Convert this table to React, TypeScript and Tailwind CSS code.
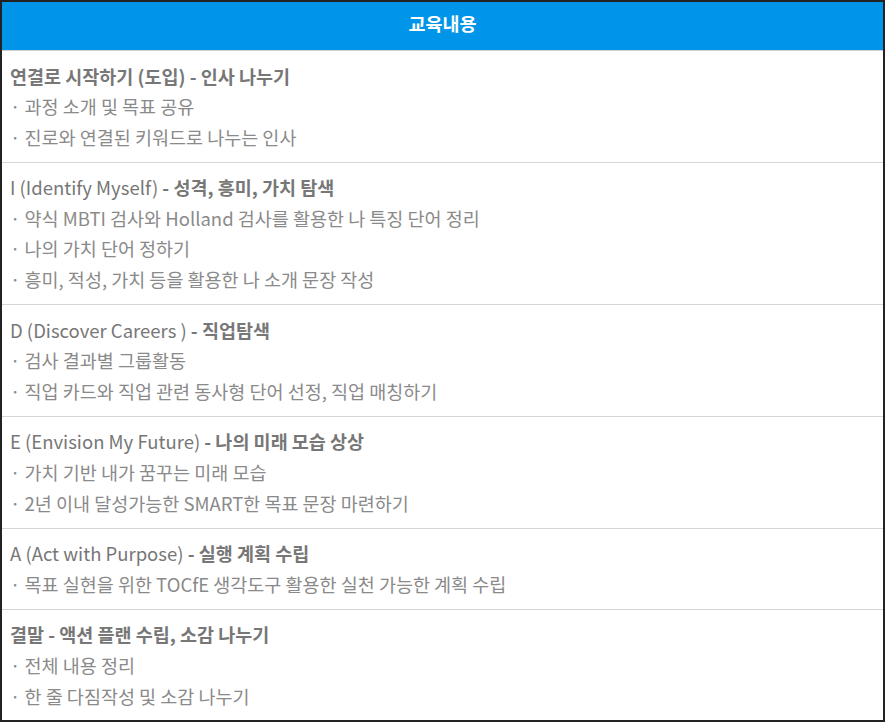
import React from "react";

const sections: { en?: string; title: string; items: string[] }[] = [
  {
    title: "연결로 시작하기 (도입) - 인사 나누기",
    items: ["과정 소개 및 목표 공유", "진로와 연결된 키워드로 나누는 인사"],
  },
  {
    en: "I (Identify Myself) ",
    title: "- 성격, 흥미, 가치 탐색",
    items: [
      "약식 MBTI 검사와 Holland 검사를 활용한 나 특징 단어 정리",
      "나의 가치 단어 정하기",
      "흥미, 적성, 가치 등을 활용한 나 소개 문장 작성",
    ],
  },
  {
    en: "D (Discover Careers ) ",
    title: "- 직업탐색",
    items: ["검사 결과별 그룹활동", "직업 카드와 직업 관련 동사형 단어 선정, 직업 매칭하기"],
  },
  {
    en: "E (Envision My Future) ",
    title: "- 나의 미래 모습 상상",
    items: ["가치 기반 내가 꿈꾸는 미래 모습", "2년 이내 달성가능한 SMART한 목표 문장 마련하기"],
  },
  {
    en: "A (Act with Purpose) ",
    title: "- 실행 계획 수립",
    items: ["목표 실현을 위한 TOCfE 생각도구 활용한 실천 가능한 계획 수립"],
  },
  {
    title: "결말 - 액션 플랜 수립, 소감 나누기",
    items: ["전체 내용 정리", "한 줄 다짐작성 및 소감 나누기"],
  },
];

export default function App() {
  return (
    <div
      className="h-[722px] w-[885px] overflow-hidden border-2 border-[#222222] bg-white"
      style={{ fontFamily: '"Noto Sans CJK KR", "Noto Sans", sans-serif' }}
    >
      <div className="flex h-[49px] items-center justify-center border-b border-[#d0d0d0] bg-[#0095e8] pb-[5px] text-[18.5px] font-bold text-white">
        교육내용
      </div>
      {sections.map((s, i) => (
        <div
          key={i}
          className="border-b border-[#d6d6d6] px-[8px] py-[9.5px] text-[18.5px] leading-[30.6px]"
        >
          <div className="text-[#777777]">
            {s.en && <span className="font-normal">{s.en}</span>}
            <span className="font-bold">{s.title}</span>
          </div>
          {s.items.map((it, j) => (
            <div key={j} className="text-[#8a8a8a]">
              · {it}
            </div>
          ))}
        </div>
      ))}
    </div>
  );
}
